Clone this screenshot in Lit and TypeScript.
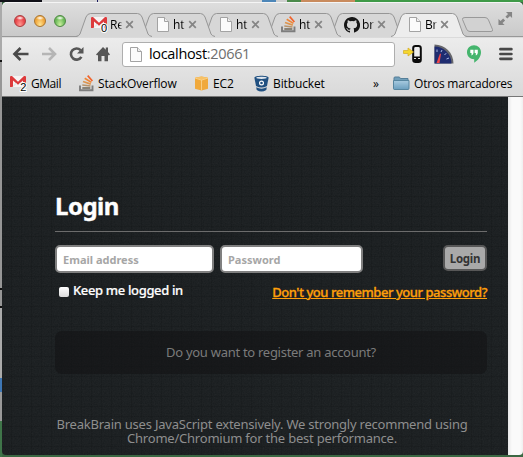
import { LitElement, html, css, nothing } from "lit";
import { customElement, property } from "lit/decorators.js";

const gmail = (n: string) => html`<svg width="17" height="17" viewBox="0 0 17 17">
  <rect x="0" y="1" width="16" height="11" rx="1" fill="#f6f3f3"/>
  <path d="M0 2Q0 1 1 1H2L8 6.8L14 1H15Q16 1 16 2V12H13V5.5L8 9.8L3 5.5V12H0Z" fill="#dd3a3c"/>
  <path d="M3 11.5L6.5 8M13 11.5L9.5 8" stroke="#ddd" stroke-width="1"/>
  <text x="13" y="16" text-anchor="middle" class="badge">${n}</text></svg>`;

const sheet = html`<svg width="12" height="15" viewBox="0 0 12 15">
  <path d="M.5.5H7.5L11.5 4.5V14.5H.5Z" fill="#fbfbfb" stroke="#a3a3a3"/>
  <path d="M7.5.5V4.5H11.5" fill="#eee" stroke="#a3a3a3"/></svg>`;

const stack = html`<svg width="15" height="17" viewBox="0 0 15 17">
  <path d="M1 10.5V15.3H13.5V10.5" fill="none" stroke="#7d7d7d" stroke-width="1.9"/>
  <path d="M3.3 13H11.3" stroke="#8a8478" stroke-width="1.9"/>
  <path d="M3.3 10L11.5 11" stroke="#b8936a" stroke-width="1.7"/>
  <path d="M4 6.5L11.8 9.1" stroke="#dc9550" stroke-width="1.7"/>
  <path d="M5.7 3.2L12.4 7.4" stroke="#ee8637" stroke-width="1.7"/>
  <path d="M8.7.6L13.4 6" stroke="#f1622b" stroke-width="1.7"/></svg>`;

const octocat = html`<svg width="16" height="16" viewBox="0 0 16 16">
  <path fill="#161616" d="M8 0C3.58 0 0 3.58 0 8c0 3.54 2.29 6.53 5.47 7.59.4.07.55-.17.55-.38v-1.49c-2.23.48-2.69-.94-2.69-.94-.36-.92-.89-1.17-.89-1.17-.73-.5.05-.49.05-.49.81.06 1.23.83 1.23.83.72 1.23 1.88.87 2.34.67.07-.52.28-.87.51-1.07-1.78-.2-3.64-.89-3.64-3.95 0-.87.31-1.59.82-2.15-.08-.2-.36-1.02.08-2.12 0 0 .67-.21 2.2.82a7.6 7.6 0 0 1 4 0c1.53-1.04 2.2-.82 2.2-.82.44 1.1.16 1.92.08 2.12.51.56.82 1.27.82 2.15 0 3.07-1.87 3.75-3.65 3.95.29.25.54.73.54 1.48v2.19c0 .21.15.46.55.38A8 8 0 0 0 8 0Z"/></svg>`;

const cube = html`<svg width="15" height="15" viewBox="0 0 15 15">
  <path d="M1 1.8L7.5.5L14 1.8V12.8L7.5 14.5L1 12.8Z" fill="#f0a93c"/>
  <path d="M1 1.8L7.5.5L14 1.8L7.5 4Z" fill="#f7c165"/>
  <path d="M7.5 4V14.5M1 2L7.5 4.2L14 2" stroke="#fbd794" stroke-width=".8" fill="none"/></svg>`;

const bucket = html`<svg width="15" height="17" viewBox="0 0 15 17">
  <path d="M.4 2.8C.4 0 14.6 0 14.6 2.8L13 11Q7.5 14 2 11Z" fill="#205081"/>
  <ellipse cx="7.5" cy="2.8" rx="5.2" ry="1.1" fill="#dfe6ee"/>
  <circle cx="7.5" cy="8" r="2.5" fill="#fff"/><circle cx="7.5" cy="8" r="1.3" fill="#205081"/>
  <path d="M2.2 12.3Q7.5 15 12.8 12.3L12.3 15Q7.5 18 2.7 15Z" fill="#205081"/></svg>`;

const folder = html`<svg width="17" height="15" viewBox="0 0 17 15">
  <defs><linearGradient id="fo" x2="0" y2="1"><stop stop-color="#a9cbe0"/><stop offset="1" stop-color="#6a9ebe"/></linearGradient></defs>
  <path d="M1 13V2Q1 1 2 1H6Q7 1 7.3 2.5H15V13Z" fill="#719fba" stroke="#557f99"/>
  <path d="M.5 4.5H16V12.5Q16 13.5 15 13.5H1.5Q.5 13.5.5 12.5Z" fill="url(#fo)" stroke="#57859f"/></svg>`;

@customElement("browser-tab")
class BrowserTab extends LitElement {
  @property() label = "";
  @property({ attribute: false }) icon: unknown = nothing;
  @property({ type: Boolean, reflect: true }) active = false;
  static styles = css`
    :host { position: relative; display: flex; flex: none; align-items: center; box-sizing: border-box; width: 76px; height: 25px; margin-right: -13px; padding: 0 0 0 15px; }
    .shape { position: absolute; inset: 0; }
    .fill { fill: #d7d7d7; }
    :host([active]) .fill { fill: #ededed; }
    .icon { position: relative; display: flex; justify-content: center; width: 17px; margin-right: 2px; }
    .label { position: relative; width: 13px; white-space: nowrap; font: 12px/16px "Open Sans", "Noto Sans", sans-serif; letter-spacing: -.2px; color: #000; margin-right: 2px; -webkit-mask: linear-gradient(90deg, #000 70%, transparent 95%); mask: linear-gradient(90deg, #000 70%, transparent 95%); }
    .close { position: relative; }
    .badge { font: 11px "Liberation Sans", sans-serif; fill: #000; paint-order: stroke; stroke: #fff; stroke-width: 2px; }
  `;
  render() {
    return html`<svg class="shape" width="76" height="25" viewBox="0 0 76 25">
        <path class="fill" d="M0 25Q3 24.5 4 22L10 5Q11.5 1.5 14.5 1.5H61.5Q64.5 1.5 66 5L72 22Q73 24.5 76 25Z"/>
        <path d="M0 24.5Q3 24 4 22L10 5Q11.5 1.5 14.5 1.5H61.5Q64.5 1.5 66 5L72 22Q73 24 76 24.5" fill="none" stroke="#969696"/>
      </svg>
      <span class="icon">${this.icon}</span><span class="label">${this.label}</span>
      <svg class="close" width="9" height="9" viewBox="0 0 9 9"><path d="M1.2 1.2L7.8 7.8M7.8 1.2L1.2 7.8" stroke="#858585" stroke-width="1.7"/></svg>`;
  }
}

@customElement("browser-chrome")
class BrowserChrome extends LitElement {
  static styles = css`
    :host { display: block; height: 95px; background: linear-gradient(#dedede, #c9c9c9 35px, #ececec 36px, #d9d9d9 94px); font-family: "Open Sans", "Noto Sans", sans-serif; color: #000; border-radius: 5px 5px 0 0; border-bottom: 1px solid #777; box-sizing: border-box; overflow: hidden; box-shadow: inset 0 1px #f5f5f5; }
    svg { display: block; flex: none; }
    .strip { display: flex; height: 35px; align-items: flex-end; box-sizing: border-box; border-bottom: 1px solid #989898; }
    .lights { display: flex; gap: 8px; padding: 0 9px 9px 12px; width: 53px; }
    .light { width: 12px; height: 12px; box-sizing: border-box; border-radius: 50%; border: 1px solid; }
    .red { background: radial-gradient(ellipse 4px 2px at 50% 20%, #fff, transparent), radial-gradient(at 50% 90%, #ff9a92, #e8454a 65%); border-color: #a93c3e; }
    .amber { background: radial-gradient(ellipse 4px 2px at 50% 20%, #fff, transparent), radial-gradient(at 50% 90%, #ffe492, #f0a63c 65%); border-color: #a9752f; }
    .green { background: radial-gradient(ellipse 4px 2px at 50% 20%, #fff, transparent), radial-gradient(at 50% 90%, #cdf0a0, #6cba59 65%); border-color: #4e8843; }
    browser-tab { margin-bottom: -1px; }
    .t0 { z-index: 6; } .t1 { z-index: 5; } .t2 { z-index: 4; } .t3 { z-index: 3; } .t4 { z-index: 2; } .t5 { z-index: 8; }
    .new { margin: 0 4px 3px 7px; }
    .full { margin-bottom: 10px; }
    .bar { display: flex; align-items: center; height: 34px; padding-left: 10px; }
    .nav { display: flex; width: 109px; gap: 10px; }
    .omni { display: flex; align-items: center; width: 273px; height: 25px; margin-left: 1px; box-sizing: border-box; padding-left: 7px; gap: 7px; background: #fff; border: 1px solid #aeaeae; border-radius: 3px; font-size: 14.5px; line-height: 22px; letter-spacing: -.33px; white-space: nowrap; }
    .port { color: #6e6e6e; }
    .ext { display: flex; align-items: center; margin-left: 8px; }
    .dial { margin-left: 11px; } .quote { margin-left: 12px; } .menu { margin-left: 17px; }
    .marks { display: flex; align-items: center; height: 25px; font-size: 12px; line-height: 16px; padding-left: 8px; white-space: nowrap; }
    .mark { display: flex; align-items: center; gap: 4px; letter-spacing: -.12px; }
    .m0 { width: 69px; letter-spacing: -.45px; } .m1 { width: 115px; } .m2 { width: 60px; } .m3 { width: 119px; } .more { width: 20px; }
    .last { letter-spacing: -.2px; }
    .badge { font: 11px "Liberation Sans", sans-serif; fill: #000; paint-order: stroke; stroke: #fff; stroke-width: 2px; }
  `;
  tabs = [["Re", gmail("0")], ["ht", sheet], ["ht", sheet], ["ht", stack], ["br", octocat], ["Br", sheet]] as const;
  render() {
    return html`
      <div class="strip">
        <div class="lights"><i class="light red"></i><i class="light amber"></i><i class="light green"></i></div>
        ${this.tabs.map(([l, ic], i) => html`<browser-tab class="t${i}" .label=${l} .icon=${ic} ?active=${i === 5}></browser-tab>`)}
        <svg class="new" width="33" height="17" viewBox="0 0 33 17"><path d="M4 1.5H24Q26.5 1.5 27.5 4L31.5 13.5Q32 15.5 30 15.5H9Q6.5 15.5 5.5 13L1.5 3.5Q1 1.5 4 1.5Z" fill="#d2d2d2" stroke="#999"/></svg>
        <svg class="full" width="15" height="15" viewBox="0 0 16 15"><path d="M8.5.5H15V7L12.8 4.8L10 7.6L7.9 5.5L10.7 2.7ZM7 14.5H.5V8L2.7 10.2L5.5 7.4L7.6 9.5L4.8 12.3Z" fill="#858585"/></svg>
      </div>
      <div class="bar">
        <div class="nav">
          <svg width="18" height="16" viewBox="0 0 18 16"><path d="M8.5 2L2.5 8L8.5 14M3 8H16.5" stroke="#4a4a4a" stroke-width="2.7" fill="none"/></svg>
          <svg width="18" height="16" viewBox="0 0 18 16"><path d="M9 2L15 8L9 14M2 8H14.5" stroke="#b5b5b5" stroke-width="2.6" fill="none"/></svg>
          <svg width="18" height="16" viewBox="0 0 18 16"><path d="M12.6 4.2A5.6 5.6 0 1 0 13.4 10.8" stroke="#565656" stroke-width="2.6" fill="none"/><path d="M15.5 1V7.5H9Z" fill="#565656"/></svg>
          <svg width="16" height="16" viewBox="0 0 16 16"><path d="M0 8.5L7 1L9.8 3.8V1.5H12V6L14 8.5L12.8 9.5L12 8.7V15.3H8.5V10H5.5V15.3H2V8.7L1.2 9.5Z" fill="#565656"/></svg>
        </div>
        <div class="omni">${sheet}<span>localhost<span class="port">:20661</span></span></div>
        <div class="ext">
          <svg width="20" height="18" viewBox="0 0 20 18"><rect x="10.2" y="1" width="7.6" height="16" rx="2.3" fill="#eee" stroke="#0b0b0b" stroke-width="2"/><path d="M10 11.5H18V16H10Z" fill="#0b0b0b"/><path d="M11 13.5H13M15 13.5H17" stroke="#ddd"/><path d="M.5 5.5H5V3L10.5 7L5 11V8.5H.5Z" fill="#f5d72e" stroke="#d5ad22" stroke-width=".7"/></svg>
          <svg class="dial" width="20" height="20" viewBox="0 0 20 20"><path d="M.5 19.5V.5C11 .5 19.5 9 19.5 19.5Z" fill="#67676b"/><path d="M.5 19.5V2.5C9.5 2.5 17.5 10 17.5 19.5Z" fill="#1f2c70"/><path d="M3 8V5.5M7 8L8 6M10.5 11L12.2 9.2M12.5 15L15 14" stroke="#a9b8e4"/><path d="M2.5 19L6 9.5L7 10L5.5 19Z" fill="#f1464a"/></svg>
          <svg class="quote" width="16" height="20" viewBox="0 0 16 20"><path d="M8 1.3C12 1.3 15 4.3 15 8.2C15 12.8 11.8 16.5 8.2 18.7V15.2C4 15.2 1 12.1 1 8.2S4 1.3 8 1.3Z" fill="#45b56d"/><path d="M4.3 5.7H7.5V9Q7.3 10.8 5.5 11.4V9H4.3ZM8.6 5.7H11.8V9Q11.6 10.8 9.8 11.4V9H8.6Z" fill="#fff"/></svg>
          <svg class="menu" width="14" height="14" viewBox="0 0 14 14"><path d="M1.4 2.2H12.4M1.4 7H12.4M1.4 11.8H12.4" stroke="#484848" stroke-width="2.7" stroke-linecap="round"/></svg>
        </div>
      </div>
      <div class="marks">
        <span class="mark m0">${gmail("2")}GMail</span>
        <span class="mark m1">${stack}StackOverflow</span>
        <span class="mark m2">${cube}EC2</span>
        <span class="mark m3">${bucket}Bitbucket</span>
        <span class="more">»</span>
        <span class="mark last">${folder}Otros marcadores</span>
      </div>`;
  }
}

@customElement("login-page")
class LoginPage extends LitElement {
  static styles = css`
    :host { position: relative; display: block; box-sizing: border-box; width: 506px; height: 358px; padding: 95px 21px 0 53px; overflow: hidden; font-family: "Noto Sans", "Open Sans", sans-serif; color: #fff; border-bottom-left-radius: 4px;
      background: repeating-linear-gradient(90deg, transparent 0 9px, rgba(10, 12, 12, .2) 9px 10px), repeating-linear-gradient(transparent 0 9px, rgba(10, 12, 12, .2) 9px 10px), #191d1f; }
    .grain { position: absolute; inset: 0; opacity: .06; pointer-events: none; }
    .body { position: relative; }
    h1 { margin: 0; height: 39px; font-size: 24px; line-height: 28px; letter-spacing: -.5px; -webkit-text-stroke: .4px #fff; border-bottom: 1px solid #6c6c6c; }
    .fields { display: flex; margin-top: 13px; height: 28px; }
    input.text { box-sizing: border-box; height: 28px; padding: 0 6px; border: 2px solid #808080; border-radius: 5px; background: #fff; font: bold 11px "Noto Sans", sans-serif; outline: none; }
    input::placeholder { color: #a6a6a6; opacity: 1; }
    .email { width: 159px; margin-right: 6px; } .pass { width: 143px; }
    button { box-sizing: border-box; width: 44px; height: 26px; margin-left: auto; padding: 0; border: 2px solid #575757; border-radius: 5px; background: #a9a9a9; color: #333; font: bold 11.5px "Noto Sans", sans-serif; letter-spacing: -.3px; }
    .row { display: flex; justify-content: space-between; height: 20px; margin-top: 8px; font-size: 13px; line-height: 18px; font-weight: 500; white-space: nowrap; }
    label { display: flex; gap: 4px; padding-left: 4px; letter-spacing: -.35px; -webkit-text-stroke: .2px #fff; }
    input.check { appearance: none; width: 10px; height: 10px; margin: 6px 0 0; border-radius: 2px; background: linear-gradient(#fff, #dcdcdc); }
    a { color: #ffa00a; text-decoration: underline; letter-spacing: -.46px; margin-top: 2px; -webkit-text-stroke: .3px #ffa00a; }
    .register { box-sizing: border-box; display: flex; align-items: center; justify-content: center; height: 43px; padding-bottom: 2px; margin-top: 30px; border-radius: 7px; background: rgba(18, 18, 20, .55); color: #7b7b7b; font-size: 13px; letter-spacing: -.28px; }
    .note { margin: 43px 18px 0 0; text-align: center; color: #8e8e8e; font-size: 13px; line-height: 14px; white-space: nowrap; letter-spacing: -.22px; }
  `;
  render() {
    return html`
      <svg class="grain" width="506" height="358"><filter id="n"><feTurbulence type="fractalNoise" baseFrequency=".8" numOctaves="2"/><feColorMatrix type="saturate" values="0"/></filter><rect width="506" height="358" filter="url(#n)"/></svg>
      <div class="body">
        <h1>Login</h1>
        <div class="fields"><input class="text email" placeholder="Email address"><input class="text pass" type="password" placeholder="Password"><button>Login</button></div>
        <div class="row"><label><input class="check" type="checkbox"><span>Keep me logged in</span></label><a>Don't you remember your password?</a></div>
        <div class="register">Do you want to register an account?</div>
        <div class="note">BreakBrain uses JavaScript extensively. We strongly recommend using<br>Chrome/Chromium for the best performance.</div>
      </div>`;
  }
}

@customElement("app-root")
class AppRoot extends LitElement {
  static styles = css`
    :host { display: block; box-sizing: border-box; width: 523px; height: 457px; padding: 2px 0 2px 2px; overflow: hidden;
      background: linear-gradient(90deg, #101018 0 42px, #d6d6d6 42px 97px, #1a1a60 97px 98px, #d6d6d6 98px 262px, #4d86b8 262px 276px, #d0d0d0 276px 287px, #4b8a4b 287px 301px, #c98b5e 301px 355px, #3f9a48 355px) 0 0 / 523px 2px no-repeat,
        linear-gradient(#aaa 0 60px, #111 60px 62px, #969696 62px 288px, #111 288px 290px, #969696 290px 306px, #111 306px 308px, #aaa 308px 378px, #3e77b5 378px 392px, #999 392px 421px, #3f7549 421px) 0 0 / 2px 457px no-repeat, #3b6843; }
    .view { display: flex; height: 358px; }
    .scroll { width: 15px; background: linear-gradient(90deg, #e8e8e8, #fafafa 4px 12px, #efefef); border-bottom-right-radius: 4px; }
  `;
  render() {
    return html`<browser-chrome></browser-chrome><div class="view"><login-page></login-page><div class="scroll"></div></div>`;
  }
}
